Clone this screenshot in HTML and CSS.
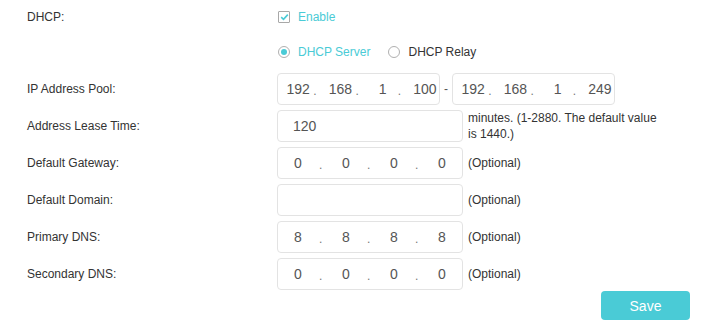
FILE: index.html
```html
<!DOCTYPE html>
<html lang="en">
<head>
    <meta charset="UTF-8">
    <meta name="viewport" content="width=device-width, initial-scale=1.0">
    <title>DHCP Server</title>
    <link rel="stylesheet" href="styles.css">
</head>
<body>

<form class="dhcp-form">
    <!-- DHCP on/off -->
    <div class="row row-check">
        <label class="row-label">DHCP:</label>
        <div class="row-field">
            <span class="checkbox checked">
                <svg width="9" height="8" viewBox="0 0 9 8"><path d="M1.2 4.2 L3.5 6.3 L7.8 1.6" fill="none" stroke="#4acbd6" stroke-width="1.6"/></svg>
            </span>
            <span class="check-text">Enable</span>
        </div>
    </div>

    <!-- Server / Relay -->
    <div class="row row-radio">
        <span class="row-label"></span>
        <div class="row-field">
            <span class="radio checked"></span>
            <span class="radio-text active">DHCP Server</span>
            <span class="radio"></span>
            <span class="radio-text">DHCP Relay</span>
        </div>
    </div>

    <div class="row">
        <label class="row-label">IP Address Pool:</label>
        <div class="row-field">
            <div class="ip-box small">
                <input value="192"><span class="dot">.</span>
                <input value="168"><span class="dot">.</span>
                <input value="1"><span class="dot">.</span>
                <input value="100">
            </div>
            <span class="range-sep">-</span>
            <div class="ip-box small">
                <input value="192"><span class="dot">.</span>
                <input value="168"><span class="dot">.</span>
                <input value="1"><span class="dot">.</span>
                <input value="249">
            </div>
        </div>
    </div>

    <div class="row">
        <label class="row-label">Address Lease Time:</label>
        <div class="row-field">
            <input class="text-box" value="120">
            <span class="hint hint-wrap">minutes. (1-2880. The default value is 1440.)</span>
        </div>
    </div>

    <div class="row">
        <label class="row-label">Default Gateway:</label>
        <div class="row-field">
            <div class="ip-box">
                <input value="0"><span class="dot">.</span>
                <input value="0"><span class="dot">.</span>
                <input value="0"><span class="dot">.</span>
                <input value="0">
            </div>
            <span class="hint">(Optional)</span>
        </div>
    </div>

    <div class="row">
        <label class="row-label">Default Domain:</label>
        <div class="row-field">
            <input class="text-box" value="">
            <span class="hint">(Optional)</span>
        </div>
    </div>

    <div class="row">
        <label class="row-label">Primary DNS:</label>
        <div class="row-field">
            <div class="ip-box">
                <input value="8"><span class="dot">.</span>
                <input value="8"><span class="dot">.</span>
                <input value="8"><span class="dot">.</span>
                <input value="8">
            </div>
            <span class="hint">(Optional)</span>
        </div>
    </div>

    <div class="row">
        <label class="row-label">Secondary DNS:</label>
        <div class="row-field">
            <div class="ip-box">
                <input value="0"><span class="dot">.</span>
                <input value="0"><span class="dot">.</span>
                <input value="0"><span class="dot">.</span>
                <input value="0">
            </div>
            <span class="hint">(Optional)</span>
        </div>
    </div>

    <div class="actions">
        <button type="button" class="save-button">Save</button>
    </div>
</form>

</body>
</html>
```

FILE: styles.css
```css
body {
    margin: 0;
    padding: 0;
    background-color: #fff;
    font-family: "Liberation Sans", Arial, sans-serif;
    font-size: 12px;
    color: #333;
}
.dhcp-form {
    padding: 5px 22px 0 27px;
}
.row {
    display: flex;
    align-items: center;
    height: 32px;
    margin-top: 5px;
}
.row-check {
    height: 24px;
    margin-top: 0;
}
.row-radio {
    height: 24px;
    margin-top: 11px;
    margin-bottom: 9px;
}
.row-label {
    width: 250px;
    flex-shrink: 0;
    color: #333;
}
.row-field {
    display: flex;
    align-items: center;
    height: 100%;
}

/* checkbox + radios */
.checkbox {
    display: flex;
    align-items: center;
    justify-content: center;
    width: 10px;
    height: 10px;
    border: 1px solid #a8a8a8;
    border-radius: 1px;
    margin: 0 8px 0 1px;
}
.check-text {
    color: #4acbd6;
}
.radio {
    position: relative;
    width: 10px;
    height: 10px;
    border: 1px solid #b0b0b0;
    border-radius: 50%;
    margin: 0 8px 0 1px;
}
.radio.checked::after {
    content: "";
    position: absolute;
    left: 2px;
    top: 2px;
    width: 6px;
    height: 6px;
    border-radius: 50%;
    background-color: #4acbd6;
}
.radio-text {
    margin-right: 17px;
    color: #333;
}
.radio-text.active {
    color: #4acbd6;
}

/* inputs */
.ip-box,
.text-box {
    box-sizing: border-box;
    width: 186px;
    height: 32px;
    border: 1px solid #e3e3e3;
    border-radius: 4px;
    background: #fff;
}
.ip-box {
    display: grid;
    grid-template-columns: minmax(0, 1fr) 8px minmax(0, 1fr) 8px minmax(0, 1fr) 8px minmax(0, 1fr);
    align-items: center;
}
.ip-box.small {
    width: 163px;
}
.ip-box input {
    width: 100%;
    min-width: 0;
    border: none;
    padding: 0;
    outline: none;
    background: transparent;
    font-family: "Liberation Sans", Arial, sans-serif;
    font-size: 14px;
    color: #555;
    text-align: center;
}
.ip-box.small input {
    padding-left: 3px;
}
.dot {
    font-size: 12px;
    color: #777;
    padding-left: 1px;
    padding-top: 3px;
}
.text-box {
    padding: 0 0 0 15px;
    outline: none;
    font-family: "Liberation Sans", Arial, sans-serif;
    font-size: 14px;
    color: #555;
}
.range-sep {
    width: 12px;
    text-align: center;
    color: #555;
}
.hint {
    margin-left: 5px;
    color: #333;
}
.hint-wrap {
    width: 196px;
    line-height: 16px;
}

.actions {
    display: flex;
    justify-content: flex-end;
    margin-top: 1px;
}
.save-button {
    width: 89px;
    height: 29px;
    border: none;
    border-radius: 4px;
    background-color: #4acbd6;
    color: white;
    font-family: "Liberation Sans", Arial, sans-serif;
    font-size: 14px;
    cursor: pointer;
}
```
